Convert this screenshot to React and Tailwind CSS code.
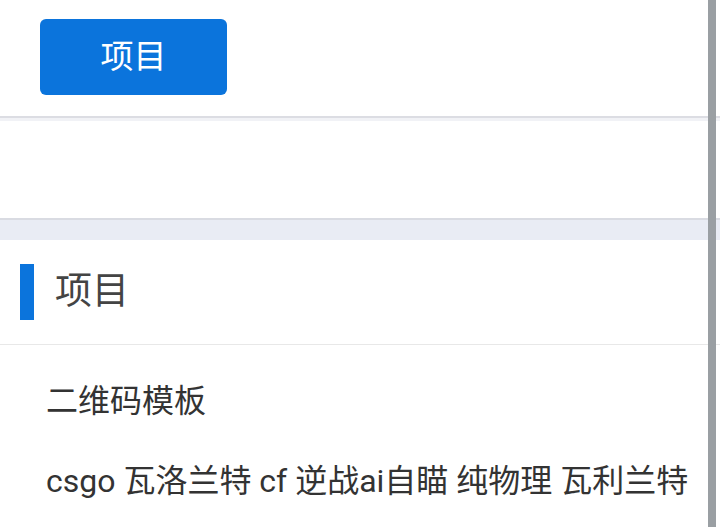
export default function App() {
  const items = ['二维码模板', 'csgo 瓦洛兰特 cf 逆战ai自瞄 纯物理 瓦利兰特'];

  return (
    <div
      className="relative h-[527px] w-[720px] overflow-hidden bg-white"
      style={{ fontFamily: 'Roboto, "Noto Sans CJK SC", sans-serif' }}
    >
      {/* Top bar */}
      <div className="h-[116px] pl-[40px] pt-[19px]">
        <button className="flex h-[76px] w-[187px] items-center justify-center rounded-[6px] bg-[#0b74dc] text-[33px] text-white">
          项目
        </button>
      </div>
      <div className="h-[2px] bg-[#dcdde3]" />
      <div className="h-[3px] bg-[#f1f2f6]" />

      <div className="h-[97px]" />

      {/* Grey band */}
      <div className="h-[2px] bg-[#d9dbe2]" />
      <div className="h-[20px] bg-[#e9ecf4]" />

      {/* Section title */}
      <div className="flex h-[105px] items-center border-b border-[#e8e8e8]">
        <div className="ml-[20px] h-[56px] w-[14px] bg-[#0b74dc]" />
        <span className="ml-[21px] text-[37px] text-[#444]">项目</span>
      </div>

      {/* List */}
      <div className="pt-[16px]">
        {items.map((item) => (
          <div key={item} className="flex h-[80px] items-center px-[46px] text-[32px] text-[#333] whitespace-nowrap">
            {item}
          </div>
        ))}
      </div>

      {/* Scrollbar */}
      <div className="absolute right-[4px] top-0 h-full w-[8px] bg-[#9a9fa3]" />
    </div>
  );
}
